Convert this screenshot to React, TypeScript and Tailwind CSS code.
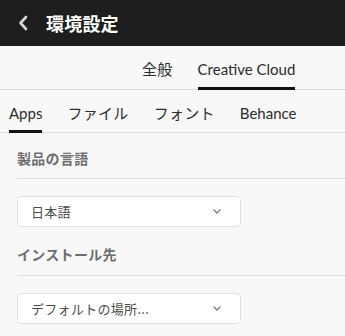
import React from "react";

const font = { fontFamily: '"Noto Sans CJK JP", "Noto Sans", sans-serif' };
const tabFont = { fontFamily: 'Lato, "Noto Sans CJK JP", sans-serif' };

function Chevron() {
  return (
    <svg width="8" height="5" viewBox="0 0 8 5" fill="none">
      <path d="M1 1 L4 4 L7 1" stroke="#7a7a7a" strokeWidth="1.3" strokeLinecap="round" strokeLinejoin="round" />
    </svg>
  );
}

function Tab({ label, active, latin }: { label: string; active?: boolean; latin?: boolean }) {
  return (
    <div className="relative h-full">
      <div
        className={
          latin
            ? "pt-[13px] text-[15px] leading-[20px] text-[#2c2c2c] tracking-[0px] whitespace-nowrap"
            : "pt-[13px] text-[15px] leading-[20px] text-[#2c2c2c] tracking-[0.3px] whitespace-nowrap"
        }
        style={tabFont}
      >
        {label}
      </div>
      {active && <div className="absolute left-0 right-0 bottom-[-1px] h-[3px] bg-[#111111]" />}
    </div>
  );
}

function Dropdown({ label }: { label: string }) {
  return (
    <div className="mt-[17px] w-[224px] h-[31px] bg-white border border-[#e1e1e1] rounded-[4px] flex items-center justify-between pl-[13px] pr-[19px]">
      <span className="text-[13px] leading-[18px] text-[#4b4b4b] tracking-[0.3px]">{label}</span>
      <Chevron />
    </div>
  );
}

export default function App() {
  return (
    <div className="w-[345px] h-[336px] bg-[#f8f8f8] overflow-hidden" style={font}>
      <div className="h-[46px] bg-[#1e1e1e] flex items-center">
        <svg className="ml-[18px]" width="10" height="16" viewBox="0 0 10 16" fill="none">
          <path d="M8 2 L2.5 8 L8 14" stroke="#d8d8d8" strokeWidth="2.6" strokeLinecap="round" strokeLinejoin="round" />
        </svg>
        <span className="ml-[18px] text-[18px] font-bold text-white leading-[24px] tracking-[0.2px]">環境設定</span>
      </div>
      <div className="h-[44px] border-b border-[#dcdcdc] flex pl-[142px] gap-[25px]">
        <Tab label="全般" />
        <Tab label="Creative Cloud" active latin />
      </div>
      <div className="h-[43px] border-b border-[#dcdcdc] flex pl-[9px] gap-[25px]">
        <Tab label="Apps" active latin />
        <Tab label="ファイル" />
        <Tab label="フォント" />
        <Tab label="Behance" latin />
      </div>
      <div className="pl-[17px]">
        <div className="pt-[15px] pb-[10px] border-b border-[#dcdcdc] text-[14px] leading-[20px] font-bold text-[#6e6e6e] tracking-[0.3px]">
          製品の言語
        </div>
        <Dropdown label="日本語" />
        <div className="mt-[17px] pb-[11px] border-b border-[#dcdcdc] text-[14px] leading-[20px] font-bold text-[#6e6e6e] tracking-[0.3px]">
          インストール先
        </div>
        <Dropdown label="デフォルトの場所..." />
      </div>
    </div>
  );
}
